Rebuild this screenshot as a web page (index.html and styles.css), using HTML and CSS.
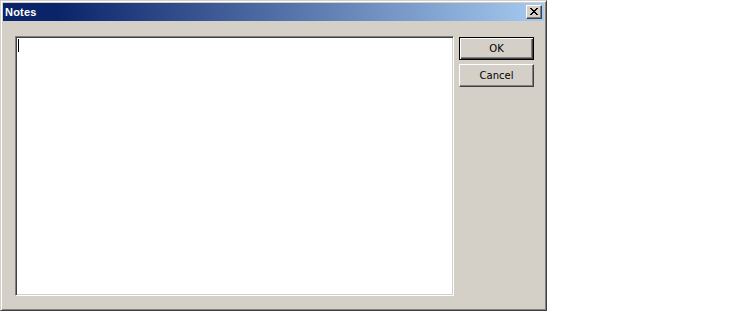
FILE: index.html
```html
<!doctype html>
<html lang="en">
<head>
    <meta charset="UTF-8">
    <title>Notes</title>
    <link rel="stylesheet" href="styles.css">
</head>
<body>
    <div class="window">
        <div class="titlebar">
            <span class="title">Notes</span>
            <button class="close-btn" title="Close">
                <svg width="8" height="7" viewBox="0 0 8 7" shape-rendering="crispEdges">
                    <path d="M0 0h2v1H0zM6 0h2v1H6zM1 1h2v1H1zM5 1h2v1H5zM2 2h4v1H2zM3 3h2v1H3zM2 4h4v1H2zM1 5h2v1H1zM5 5h2v1H5zM0 6h2v1H0zM6 6h2v1H6z" fill="#000"/>
                </svg>
            </button>
        </div>
        <div class="client">
            <div class="notes-box"><span class="caret"></span></div>
            <div class="buttons">
                <button class="btn btn-default">OK</button>
                <button class="btn">Cancel</button>
            </div>
        </div>
    </div>
</body>
</html>
```

FILE: styles.css
```css
body {
    margin: 0;
    background-color: #ffffff;
    font-family: 'Liberation Sans', Arial, sans-serif;
    font-size: 11px;
}
.window {
    box-sizing: border-box;
    width: 547px;
    height: 311px;
    background-color: #d4d0c8;
    border: 1px solid;
    border-color: #d4d0c8 #404040 #404040 #d4d0c8;
    box-shadow: inset 1px 1px #ffffff, inset -1px -1px #808080;
    padding: 2px;
    display: flex;
    flex-direction: column;
}
.titlebar {
    height: 18px;
    display: flex;
    align-items: center;
    justify-content: space-between;
    padding: 0 2px 0 2px;
    background: linear-gradient(to right, #0a246a 10%, #a6caf0);
}
.title {
    color: #ffffff;
    font-weight: bold;
    font-size: 11px;
    letter-spacing: 0.2px;
}
.close-btn {
    box-sizing: border-box;
    width: 16px;
    height: 14px;
    padding: 0;
    margin: 0;
    background-color: #d4d0c8;
    border: 1px solid;
    border-color: #ffffff #404040 #404040 #ffffff;
    box-shadow: inset -1px -1px #808080;
    display: flex;
    align-items: center;
    justify-content: center;
}
.close-btn svg {
    display: block;
    margin: 0 1px 1px 0;
}
.client {
    flex: 1;
    display: flex;
    padding: 15px 0 0 12px;
}
.notes-box {
    box-sizing: border-box;
    width: 439px;
    height: 260px;
    background-color: #ffffff;
    border: 1px solid;
    border-color: #808080 #ffffff #ffffff #808080;
    box-shadow: inset 1px 1px #404040, inset -1px -1px #d4d0c8;
    padding: 2px 0 0 2px;
}
.caret {
    display: block;
    width: 1px;
    height: 13px;
    background-color: #000000;
}
.buttons {
    display: flex;
    flex-direction: column;
    gap: 4px;
    margin: 1px 0 0 5px;
}
.btn {
    box-sizing: border-box;
    width: 75px;
    height: 23px;
    padding: 0;
    margin: 0;
    font-family: 'DejaVu Sans', sans-serif;
    font-size: 10px;
    color: #000000;
    background-color: #d4d0c8;
    border: 1px solid;
    border-color: #ffffff #404040 #404040 #ffffff;
    box-shadow: inset -1px -1px #808080;
}
.btn-default {
    border-color: #000000;
    box-shadow: inset 1px 1px #ffffff, inset -1px -1px #404040, inset -2px -2px #808080;
}
```
